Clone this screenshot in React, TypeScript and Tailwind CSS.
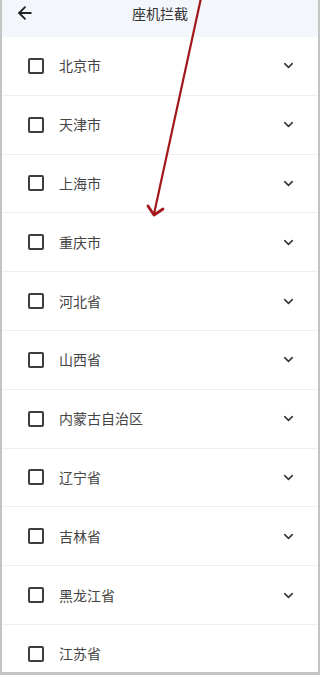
import { ArrowLeft, ChevronDown } from 'lucide-react';

// 座机拦截 - province list

const provinces = [
  '北京市',
  '天津市',
  '上海市',
  '重庆市',
  '河北省',
  '山西省',
  '内蒙古自治区',
  '辽宁省',
  '吉林省',
  '黑龙江省',
  '江苏省',
];

export default function App() {
  return (
    <div
      className="relative w-[320px] h-[675px] overflow-hidden bg-white border-x-2 border-b-[3px] border-[#c4c4c4]"
      style={{ fontFamily: '"Noto Sans CJK SC", "Noto Sans", sans-serif' }}
    >
      {/* Header */}
      <div className="h-[37px] bg-[#f3f6fb] flex items-center relative">
        <ArrowLeft size={20} strokeWidth={2.2} className="ml-[13px] -mt-[12px] text-[#222]" />
        <div className="absolute inset-x-0 top-[3px] text-center text-[14px] text-[#333]">座机拦截</div>
      </div>

      {/* List */}
      <div>
        {provinces.map((p, i) => (
          <div
            key={p}
            className="h-[58.8px] flex items-center border-b border-[#efefef] pl-[26px] pr-[22px]"
          >
            <span className="w-[16px] h-[16px] border-2 border-[#3d3d3d] rounded-[2px]" />
            <span className="ml-[15px] text-[14px] text-[#444]">{p}</span>
            {i < provinces.length - 1 && (
              <ChevronDown size={15} strokeWidth={2.4} className="ml-auto text-[#333]" />
            )}
          </div>
        ))}
      </div>

      {/* Annotation arrow */}
      <svg className="absolute left-0 top-0 pointer-events-none" width="320" height="240">
        <path d="M199 -2 L152 214" stroke="#a3171b" strokeWidth="2.2" fill="none" />
        <path d="M146 206 L152 215 L161 209" stroke="#a3171b" strokeWidth="2.8" fill="none" strokeLinecap="round" strokeLinejoin="round" />
      </svg>
    </div>
  );
}
